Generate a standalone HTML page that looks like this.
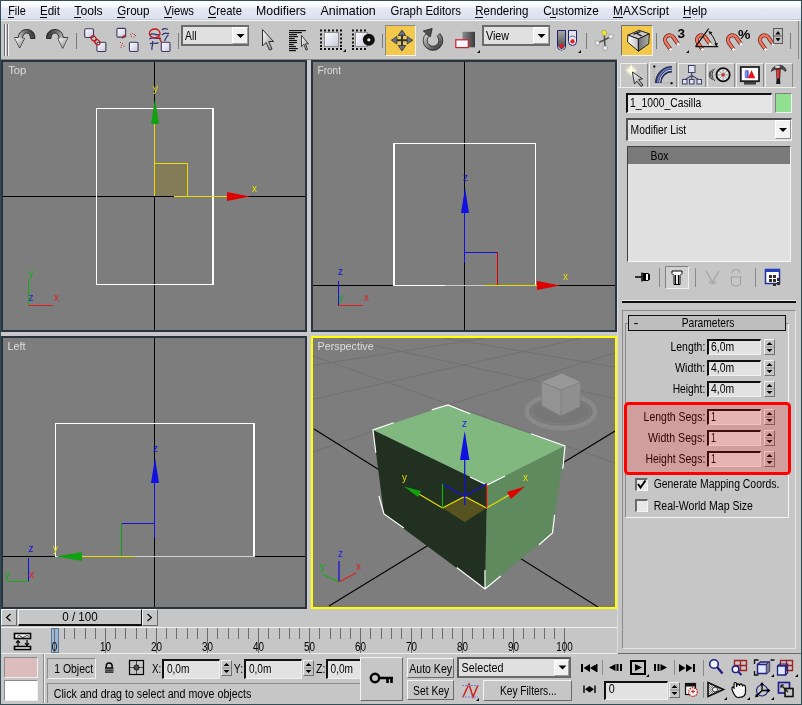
<!DOCTYPE html>
<html><head><meta charset="utf-8"><title>3ds Max</title>
<style>
*{margin:0;padding:0;box-sizing:border-box;white-space:nowrap}
html,body{width:802px;height:705px;overflow:hidden;background:#305058;font-family:"Liberation Sans", sans-serif;font-size:12px;color:#000;position:relative}
.a{position:absolute}
svg{position:absolute;left:0;top:0;overflow:visible;will-change:transform}
</style></head><body>
<div class="a" style="left:1px;top:1px;width:800px;height:19px;background:linear-gradient(#ffffff 0px,#f8f9fc 5px,#e4e8f3 8px,#dde1f0 18px);"></div>
<div class="a" style="left:1px;top:19px;width:800px;height:1px;background:#c4c8d4;"></div>
<div class="a" style="left:1px;top:20px;width:800px;height:1px;background:#f8f8f8;"></div>
<div class="a" style="left:8px;top:17px;width:6px;height:1px;background:#000;"></div>
<div class="a" style="left:40px;top:17px;width:7px;height:1px;background:#000;"></div>
<div class="a" style="left:74px;top:17px;width:7px;height:1px;background:#000;"></div>
<div class="a" style="left:117px;top:17px;width:8px;height:1px;background:#000;"></div>
<div class="a" style="left:164px;top:17px;width:8px;height:1px;background:#000;"></div>
<div class="a" style="left:208px;top:17px;width:8px;height:1px;background:#000;"></div>
<div class="a" style="left:475px;top:17px;width:8px;height:1px;background:#000;"></div>
<div class="a" style="left:550px;top:17px;width:6px;height:1px;background:#000;"></div>
<div class="a" style="left:613px;top:17px;width:10px;height:1px;background:#000;"></div>
<div class="a" style="left:683px;top:17px;width:8px;height:1px;background:#000;"></div>
<div class="a" style="left:1px;top:21px;width:800px;height:38px;background:#c6c6c6;"></div>
<div class="a" style="left:1px;top:59px;width:616px;height:1px;background:#858585;"></div>
<div class="a" style="left:181px;top:25px;width:68px;height:21px;background:#e0e0e0;border-style:solid;border-width:2px;border-color:#6a6a6a #6a6a6a #6a6a6a #6a6a6a;"></div>
<div class="a" style="left:232px;top:27px;width:16px;height:17px;background:#f0f0f0;border-style:solid;border-width:1px;border-color:#ffffff #a0a0a0 #a0a0a0 #ffffff;"></div>
<div class="a" style="left:482px;top:25px;width:68px;height:21px;background:#e0e0e0;border-style:solid;border-width:2px;border-color:#6a6a6a #6a6a6a #6a6a6a #6a6a6a;"></div>
<div class="a" style="left:533px;top:27px;width:16px;height:17px;background:#f0f0f0;border-style:solid;border-width:1px;border-color:#ffffff #a0a0a0 #a0a0a0 #ffffff;"></div>
<div class="a" style="left:385px;top:25px;width:31px;height:31px;background:#f2c94c;border-style:solid;border-width:1px;border-color:#8a8a8a #f4f4f4 #f4f4f4 #8a8a8a;"></div>
<div class="a" style="left:621px;top:25px;width:32px;height:31px;background:#f2c94c;border-style:solid;border-width:1px;border-color:#707070 #f4f4f4 #f4f4f4 #707070;"></div>
<div class="a" style="left:1px;top:60px;width:616px;height:549px;background:#c9c9c9;"></div>
<div class="a" style="left:1px;top:60px;width:306px;height:272px;background:#7d7d7d;border-style:solid;border-width:2px;border-color:#2a3340 #2a3340 #2a3340 #2a3340;"></div>
<div class="a" style="left:311px;top:60px;width:306px;height:272px;background:#7d7d7d;border-style:solid;border-width:2px;border-color:#2a3340 #2a3340 #2a3340 #2a3340;"></div>
<div class="a" style="left:1px;top:336px;width:306px;height:273px;background:#7d7d7d;border-style:solid;border-width:2px;border-color:#2a3340 #2a3340 #2a3340 #2a3340;"></div>
<div class="a" style="left:311px;top:336px;width:306px;height:273px;background:#7d7d7d;border-style:solid;border-width:2px;border-color:#ffff00 #ffff00 #ffff00 #ffff00;"></div>
<div class="a" style="left:617px;top:59px;width:184px;height:594px;background:#c6c6c6;"></div>
<div class="a" style="left:617px;top:60px;width:1px;height:593px;background:#dcdcdc;"></div>
<div class="a" style="left:620px;top:63px;width:28px;height:25px;background:#c6c6c6;border-style:solid;border-width:1px 1px 0 1px;border-color:#ececec #8a8a8a #8a8a8a #ececec"></div>
<div class="a" style="left:649px;top:62px;width:28px;height:26px;background:#c6c6c6;border-style:solid;border-width:1px 1px 0 1px;border-color:#ececec #8a8a8a #8a8a8a #ececec"></div>
<div class="a" style="left:678px;top:63px;width:28px;height:25px;background:#c6c6c6;border-style:solid;border-width:1px 1px 0 1px;border-color:#ececec #8a8a8a #8a8a8a #ececec"></div>
<div class="a" style="left:707px;top:63px;width:28px;height:25px;background:#c6c6c6;border-style:solid;border-width:1px 1px 0 1px;border-color:#ececec #8a8a8a #8a8a8a #ececec"></div>
<div class="a" style="left:736px;top:63px;width:28px;height:25px;background:#c6c6c6;border-style:solid;border-width:1px 1px 0 1px;border-color:#ececec #8a8a8a #8a8a8a #ececec"></div>
<div class="a" style="left:765px;top:63px;width:28px;height:25px;background:#c6c6c6;border-style:solid;border-width:1px 1px 0 1px;border-color:#ececec #8a8a8a #8a8a8a #ececec"></div>
<div class="a" style="left:618px;top:87px;width:178px;height:1px;background:#ececec;"></div>
<div class="a" style="left:626px;top:93px;width:146px;height:20px;background:#e4e4e4;border-style:solid;border-width:0px;border-color:#101010 #f0f0f0 #f0f0f0 #101010;border-width:2px 1px 1px 2px;"></div>
<div class="a" style="left:775px;top:93px;width:17px;height:20px;background:#92e092;border-style:solid;border-width:1px;border-color:#808080 #f0f0f0 #f0f0f0 #808080;"></div>
<div class="a" style="left:626px;top:118px;width:166px;height:23px;background:#e2e2e2;border-style:solid;border-width:0px;border-color:#505050 #f0f0f0 #f0f0f0 #505050;border-width:2px 1px 1px 2px;"></div>
<div class="a" style="left:775px;top:120px;width:16px;height:19px;background:#f2f2f2;border-style:solid;border-width:1px;border-color:#ffffff #909090 #909090 #ffffff;"></div>
<div class="a" style="left:627px;top:146px;width:164px;height:116px;background:#e0e0e0;border-style:solid;border-width:1px;border-color:#404040 #f4f4f4 #f4f4f4 #404040;"></div>
<div class="a" style="left:628px;top:147px;width:162px;height:17px;background:#7a7a7a;"></div>
<div class="a" style="left:622px;top:300px;width:174px;height:1px;background:#ececec;"></div>
<div class="a" style="left:622px;top:301px;width:174px;height:2px;background:#101010;"></div>
<div class="a" style="left:622px;top:310px;width:174px;height:339px;border-style:solid;border-width:1px;border-color:#8a8a8a #e4e4e4 #e4e4e4 #8a8a8a;"></div>
<div class="a" style="left:625px;top:323px;width:164px;height:195px;border-style:solid;border-width:1px;border-color:#8a8a8a #f4f4f4 #f4f4f4 #8a8a8a;"></div>
<div class="a" style="left:628px;top:315px;width:158px;height:16px;background:#bebebe;border-style:solid;border-width:1px;border-color:#101010 #101010 #101010 #101010;"></div>
<div class="a" style="left:707px;top:339px;width:54px;height:16px;background:#e2e2e2;border-style:solid;border-width:0px;border-color:#101010 #f0f0f0 #f0f0f0 #101010;border-width:2px 1px 1px 2px;"></div>
<div class="a" style="left:764px;top:339px;width:11px;height:16px;background:#c6c6c6;border-style:solid;border-width:1px;border-color:#f0f0f0 #707070 #707070 #f0f0f0;"></div>
<div class="a" style="left:707px;top:360px;width:54px;height:16px;background:#e2e2e2;border-style:solid;border-width:0px;border-color:#101010 #f0f0f0 #f0f0f0 #101010;border-width:2px 1px 1px 2px;"></div>
<div class="a" style="left:764px;top:360px;width:11px;height:16px;background:#c6c6c6;border-style:solid;border-width:1px;border-color:#f0f0f0 #707070 #707070 #f0f0f0;"></div>
<div class="a" style="left:707px;top:381px;width:54px;height:16px;background:#e2e2e2;border-style:solid;border-width:0px;border-color:#101010 #f0f0f0 #f0f0f0 #101010;border-width:2px 1px 1px 2px;"></div>
<div class="a" style="left:764px;top:381px;width:11px;height:16px;background:#c6c6c6;border-style:solid;border-width:1px;border-color:#f0f0f0 #707070 #707070 #f0f0f0;"></div>
<div class="a" style="left:707px;top:409px;width:54px;height:16px;background:#e2e2e2;border-style:solid;border-width:0px;border-color:#101010 #f0f0f0 #f0f0f0 #101010;border-width:2px 1px 1px 2px;"></div>
<div class="a" style="left:764px;top:409px;width:11px;height:16px;background:#c6c6c6;border-style:solid;border-width:1px;border-color:#f0f0f0 #707070 #707070 #f0f0f0;"></div>
<div class="a" style="left:707px;top:430px;width:54px;height:16px;background:#e2e2e2;border-style:solid;border-width:0px;border-color:#101010 #f0f0f0 #f0f0f0 #101010;border-width:2px 1px 1px 2px;"></div>
<div class="a" style="left:764px;top:430px;width:11px;height:16px;background:#c6c6c6;border-style:solid;border-width:1px;border-color:#f0f0f0 #707070 #707070 #f0f0f0;"></div>
<div class="a" style="left:707px;top:451px;width:54px;height:16px;background:#e2e2e2;border-style:solid;border-width:0px;border-color:#101010 #f0f0f0 #f0f0f0 #101010;border-width:2px 1px 1px 2px;"></div>
<div class="a" style="left:764px;top:451px;width:11px;height:16px;background:#c6c6c6;border-style:solid;border-width:1px;border-color:#f0f0f0 #707070 #707070 #f0f0f0;"></div>
<div class="a" style="left:635px;top:478px;width:13px;height:13px;background:#e8e8e8;border-style:solid;border-width:0px;border-color:#6a6a6a #f4f4f4 #f4f4f4 #6a6a6a;border-width:2px 1px 1px 2px;"></div>
<div class="a" style="left:635px;top:499px;width:13px;height:13px;background:#e8e8e8;border-style:solid;border-width:0px;border-color:#6a6a6a #f4f4f4 #f4f4f4 #6a6a6a;border-width:2px 1px 1px 2px;"></div>
<div class="a" style="left:618px;top:653px;width:182px;height:1px;background:#8a8a8a;"></div>
<div class="a" style="left:1px;top:609px;width:616px;height:19px;background:#c6c6c6;"></div>
<div class="a" style="left:1px;top:627px;width:616px;height:1px;background:#f2f2f2;"></div>
<div class="a" style="left:1px;top:609px;width:16px;height:17px;background:#c6c6c6;border-style:solid;border-width:1px;border-color:#f4f4f4 #6a6a6a #6a6a6a #f4f4f4;"></div>
<div class="a" style="left:18px;top:609px;width:124px;height:17px;background:#c6c6c6;border-style:solid;border-width:0px;border-color:#f4f4f4 #101010 #101010 #f4f4f4;border-width:1px 1px 2px 1px;"></div>
<div class="a" style="left:142px;top:609px;width:16px;height:17px;background:#c6c6c6;border-style:solid;border-width:1px;border-color:#f4f4f4 #6a6a6a #6a6a6a #f4f4f4;"></div>
<div class="a" style="left:1px;top:628px;width:616px;height:25px;background:#c6c6c6;"></div>
<div class="a" style="left:51px;top:628px;width:8px;height:25px;background:#9cb8d6;border-style:solid;border-width:1px;border-color:#5a7a9a #5a7a9a #5a7a9a #5a7a9a;"></div>
<div class="a" style="left:1px;top:653px;width:800px;height:51px;background:#c6c6c6;"></div>
<div class="a" style="left:1px;top:653px;width:616px;height:1px;background:#ececec;"></div>
<div class="a" style="left:618px;top:653px;width:183px;height:1px;background:#6a6a6a;"></div>
<div class="a" style="left:4px;top:657px;width:34px;height:21px;background:#dcbcbc;border-style:solid;border-width:1px;border-color:#8a8a8a #f0f0f0 #f0f0f0 #8a8a8a;"></div>
<div class="a" style="left:4px;top:680px;width:34px;height:21px;background:#ffffff;border-style:solid;border-width:1px;border-color:#8a8a8a #f0f0f0 #f0f0f0 #8a8a8a;"></div>
<div class="a" style="left:43px;top:654px;width:1px;height:49px;background:#8a8a8a;"></div>
<div class="a" style="left:44px;top:654px;width:1px;height:49px;background:#f0f0f0;"></div>
<div class="a" style="left:47px;top:658px;width:49px;height:21px;border-style:solid;border-width:1px;border-color:#8a8a8a #f0f0f0 #f0f0f0 #8a8a8a;"></div>
<div class="a" style="left:47px;top:683px;width:314px;height:20px;border-style:solid;border-width:0px;border-color:#8a8a8a #f0f0f0 #f0f0f0 #8a8a8a;border-width:1px 0 0 1px;"></div>
<div class="a" style="left:162px;top:659px;width:58px;height:20px;background:#e2e2e2;border-style:solid;border-width:0px;border-color:#101010 #f0f0f0 #f0f0f0 #101010;border-width:2px 1px 1px 2px;"></div>
<div class="a" style="left:221px;top:660px;width:11px;height:16px;background:#c6c6c6;border-style:solid;border-width:1px;border-color:#f0f0f0 #707070 #707070 #f0f0f0;"></div>
<div class="a" style="left:244px;top:659px;width:58px;height:20px;background:#e2e2e2;border-style:solid;border-width:0px;border-color:#101010 #f0f0f0 #f0f0f0 #101010;border-width:2px 1px 1px 2px;"></div>
<div class="a" style="left:303px;top:660px;width:11px;height:16px;background:#c6c6c6;border-style:solid;border-width:1px;border-color:#f0f0f0 #707070 #707070 #f0f0f0;"></div>
<div class="a" style="left:326px;top:659px;width:36px;height:20px;background:#e2e2e2;border-style:solid;border-width:0px;border-color:#101010 #f0f0f0 #f0f0f0 #101010;border-width:2px 0 1px 2px;"></div>
<div class="a" style="left:360px;top:657px;width:43px;height:44px;background:#c6c6c6;border-style:solid;border-width:1px;border-color:#f4f4f4 #6a6a6a #6a6a6a #f4f4f4;"></div>
<div class="a" style="left:407px;top:658px;width:47px;height:20px;background:#c6c6c6;border-style:solid;border-width:1px;border-color:#f4f4f4 #6a6a6a #6a6a6a #f4f4f4;"></div>
<div class="a" style="left:407px;top:680px;width:47px;height:20px;background:#c6c6c6;border-style:solid;border-width:1px;border-color:#f4f4f4 #6a6a6a #6a6a6a #f4f4f4;"></div>
<div class="a" style="left:457px;top:657px;width:114px;height:21px;background:#e0e0e0;border-style:solid;border-width:2px;border-color:#5a5a5a #6a6a6a #6a6a6a #5a5a5a;"></div>
<div class="a" style="left:554px;top:660px;width:15px;height:16px;background:#f2f2f2;border-style:solid;border-width:1px;border-color:#ffffff #a0a0a0 #a0a0a0 #ffffff;"></div>
<div class="a" style="left:483px;top:680px;width:89px;height:21px;background:#c6c6c6;border-style:solid;border-width:1px;border-color:#f4f4f4 #6a6a6a #6a6a6a #f4f4f4;"></div>
<div class="a" style="left:604px;top:681px;width:64px;height:19px;background:#e2e2e2;border-style:solid;border-width:0px;border-color:#101010 #f0f0f0 #f0f0f0 #101010;border-width:2px 1px 1px 2px;"></div>
<div class="a" style="left:669px;top:682px;width:11px;height:16px;background:#c6c6c6;border-style:solid;border-width:1px;border-color:#f0f0f0 #707070 #707070 #f0f0f0;"></div>
<svg width="802" height="705" viewBox="0 0 802 705" font-family="Liberation Sans">
<defs>
 <linearGradient id="arr" x1="0" y1="0" x2="0" y2="1"><stop offset="0" stop-color="#404040"/><stop offset=".45" stop-color="#a0a0a0"/><stop offset="1" stop-color="#f4f4f4"/></linearGradient>
 <linearGradient id="arrh" x1="0" y1="0" x2="1" y2="1"><stop offset="0" stop-color="#ffffff"/><stop offset="1" stop-color="#808080"/></linearGradient>
 <linearGradient id="box" x1="0" y1="0" x2="1" y2="1"><stop offset="0" stop-color="#ffffff"/><stop offset="1" stop-color="#c8c8e0"/></linearGradient>
 <linearGradient id="ptr" x1="0" y1="0" x2="1" y2="1"><stop offset="0" stop-color="#ffffff"/><stop offset="1" stop-color="#909090"/></linearGradient>
 <radialGradient id="star"><stop offset="0" stop-color="#ffffff"/><stop offset=".45" stop-color="#f4f0c0" stop-opacity=".9"/><stop offset="1" stop-color="#c8c8c8" stop-opacity="0"/></radialGradient>
 <linearGradient id="bend" x1="0" y1="0" x2="1" y2="0"><stop offset="0" stop-color="#303870"/><stop offset=".5" stop-color="#b0b8e0"/><stop offset="1" stop-color="#303870"/></linearGradient>
 <clipPath id="cTop"><rect x="3" y="62" width="302" height="268"/></clipPath>
 <clipPath id="cFront"><rect x="313" y="62" width="302" height="268"/></clipPath>
 <clipPath id="cLeft"><rect x="3" y="338" width="302" height="269"/></clipPath>
 <clipPath id="cPersp"><rect x="313" y="338" width="302" height="269"/></clipPath>
 <pattern id="dith" width="2" height="2" patternUnits="userSpaceOnUse"><rect width="2" height="2" fill="#e8e8e8"/><rect width="1" height="1" fill="#808080"/><rect x="1" y="1" width="1" height="1" fill="#808080"/></pattern>
 <linearGradient id="undog" x1="1" y1="0" x2="0" y2="0.4"><stop offset="0" stop-color="#1a1a1a"/><stop offset=".45" stop-color="#707070"/><stop offset="1" stop-color="#e8e8e8"/></linearGradient>
 <linearGradient id="redog" x1="0" y1="0" x2="1" y2="0.4"><stop offset="0" stop-color="#1a1a1a"/><stop offset=".45" stop-color="#707070"/><stop offset="1" stop-color="#e8e8e8"/></linearGradient>
 <linearGradient id="rotg" x1="0" y1="0" x2="1" y2="1"><stop offset="0" stop-color="#e0e0e0"/><stop offset=".5" stop-color="#808080"/><stop offset="1" stop-color="#282828"/></linearGradient>
 <linearGradient id="scg" x1="0" y1="0" x2="1" y2="0"><stop offset="0" stop-color="#8a8a8a"/><stop offset="1" stop-color="#3a3a3a"/></linearGradient>
 <linearGradient id="keyl" x1="0" y1="0" x2="1" y2="0"><stop offset="0" stop-color="#ffffff"/><stop offset="1" stop-color="#c0c0c0"/></linearGradient>
 <linearGradient id="keyr" x1="0" y1="0" x2="1" y2="0"><stop offset="0" stop-color="#707070"/><stop offset="1" stop-color="#b0b0b0"/></linearGradient>
 <clipPath id="cGrid"><path d="M313,338 H615 V475 L470,430 L313,470 Z"/></clipPath>
 <linearGradient id="pivg" x1="0" y1="0" x2="0" y2="1"><stop offset="0" stop-color="#a8a8a8"/><stop offset=".7" stop-color="#606060"/><stop offset="1" stop-color="#303050"/></linearGradient>
</defs>

<g id="toolbar">
 <!-- grip -->
 <rect x="4" y="24" width="1" height="32" fill="#6a6a6a"/><rect x="5" y="24" width="1" height="32" fill="#f4f4f4"/>
 <rect x="7" y="24" width="1" height="32" fill="#6a6a6a"/><rect x="8" y="24" width="1" height="32" fill="#f4f4f4"/>
 <!-- undo -->
 <path d="M35,38.5 C35,32 31,29.5 26.5,29.5 C22,29.5 18.8,32.5 18.2,37.5 L14.5,37.5 L19.6,48 L24.5,38.5 L22.3,38.5 C22.8,35 24.5,33 26.5,33 C29,33 30.5,35 30.5,38.5 Z" fill="url(#undog)" stroke="#202020" stroke-width=".9"/>
 <path d="M14.8,37.8 L19.6,47.5 L24.2,38.6 Z" fill="url(#arrh)"/>
 <!-- redo -->
 <path d="M46.5,38.5 C46.5,32 50.5,29.5 55,29.5 C59.5,29.5 62.7,32.5 63.3,37.5 L67.9,37.5 L62.7,48.3 L57.9,38.5 L59.2,38.5 C58.7,35 57,33 55,33 C52.5,33 51,35 51,38.5 Z" fill="url(#redog)" stroke="#202020" stroke-width=".9"/>
 <path d="M67.6,37.8 L62.7,47.8 L58.2,38.6 Z" fill="url(#arrh)"/>
 <rect x="76" y="33" width="1" height="16" fill="#7a7a7a"/>
 <!-- link -->
 <rect x="84.7" y="28.7" width="8.8" height="8.8" rx="1.2" fill="url(#box)" stroke="#3a3a60" stroke-width="1.1"/>
 <rect x="96.9" y="42.3" width="9" height="9.2" rx="1.2" fill="url(#box)" stroke="#3a3a60" stroke-width="1.1"/>
 <ellipse cx="93.6" cy="38.4" rx="3" ry="2.2" transform="rotate(45 93.6 38.4)" fill="none" stroke="#b81818" stroke-width="1.2"/>
 <ellipse cx="97.3" cy="42.2" rx="3" ry="2.2" transform="rotate(45 97.3 42.2)" fill="none" stroke="#b81818" stroke-width="1.2"/>
 <!-- unlink -->
 <rect x="116.9" y="28.4" width="8.7" height="8.7" rx="1.2" fill="url(#box)" stroke="#3a3a60" stroke-width="1.1"/>
 <rect x="129.4" y="42.3" width="8.7" height="9.2" rx="1.2" fill="url(#box)" stroke="#3a3a60" stroke-width="1.1"/>
 <path d="M122.5,38.5 C122.5,36 124.5,35 126,36.5" fill="none" stroke="#b81818" stroke-width="1.3"/>
 <path d="M130,34h1v1h-1z M132,33h1v1h-1z M134,34h1v1h-1z M131,36h1v1h-1z M133.5,36.5h1v1h-1z M135,35h1v1h-1z M120,42h1v1h-1z M122,43h1v1h-1z M121,45h1v1h-1z M123.5,45.5h1v1h-1z M120.5,47h1v1h-1z" fill="#c03838"/>
 <!-- bind -->
 <path d="M150,35 C153,32 156,36 160,34.5 M149.5,39 C153,36 157,40 161,38 M150,44 C153,41.5 156,45 158.5,42.5 M152,50 C151,46 154,44 152.5,41 M162,30 C165,27 167,30 168,29 M162,35 C166,31 167,35 169,33 M164.5,41 C166,38 166.5,36 168.5,35" fill="none" stroke="#2a3078" stroke-width="1.2"/>
 <ellipse cx="154.7" cy="33.4" rx="5.3" ry="4.4" fill="none" stroke="#c81818" stroke-width="1.3"/>
 <path d="M158.5,36.5 L161.5,42.5" stroke="#c81818" stroke-width="1.3"/>
 <rect x="161.3" y="42.2" width="8.7" height="9.3" rx="1.2" fill="url(#box)" stroke="#3a3a60" stroke-width="1.1"/>
 <rect x="178" y="33" width="1" height="16" fill="#7a7a7a"/>
 <!-- select arrow -->
 <path d="M262.5,29.5 L262.5,46 L266,42.5 L269.5,50 L272,49 L268.7,41.5 L273.5,41.5 Z" fill="url(#ptr)" stroke="#303030" stroke-width="1"/>
 <!-- select by name -->
 <rect x="289" y="30" width="16.9" height="1.2" fill="#101010"/><rect x="289" y="32" width="12.9" height="1.2" fill="#101010"/><rect x="289" y="34" width="7.9" height="1.2" fill="#101010"/><rect x="289" y="36" width="8.9" height="1.2" fill="#101010"/><rect x="289" y="38" width="5.7" height="1.2" fill="#101010"/><rect x="289" y="40" width="7.9" height="1.2" fill="#101010"/><rect x="289" y="42" width="7.9" height="1.2" fill="#101010"/><rect x="289" y="44" width="4.7" height="1.2" fill="#101010"/><rect x="289" y="46" width="6.9" height="1.2" fill="#101010"/><rect x="289" y="48" width="8.9" height="1.2" fill="#101010"/><rect x="289" y="50" width="6.9" height="1.2" fill="#101010"/>
 <path d="M301.5,35.3 L301.5,46.7 L304,44.3 L306,50.2 L307.5,49.5 L305.5,43.9 L308.4,43.9 Z" fill="url(#ptr)" stroke="#303030" stroke-width=".9"/>
 <!-- rect region -->
 <g fill="#101010">
  <path d="M320,29.5h2v2h-2z M324,29.5h2v2h-2z M328,29.5h2v2h-2z M332,29.5h2v2h-2z M336,29.5h2v2h-2z M340,29.5h2v2h-2z
   M320,48h2v2h-2z M324,48h2v2h-2z M328,48h2v2h-2z M332,48h2v2h-2z M336,48h2v2h-2z M340,48h2v2h-2z
   M320,33.5h2v2h-2z M320,37.5h2v2h-2z M320,41.5h2v2h-2z M320,45h2v2h-2z M340,33.5h2v2h-2z M340,37.5h2v2h-2z M340,41.5h2v2h-2z M340,45h2v2h-2z"/>
 </g>
 <rect x="324.5" y="32.5" width="14" height="14" fill="url(#box)" stroke="#909090"/>
 <path d="M343,52 h3 v-3z" fill="#101010"/>
 <!-- window/crossing -->
 <g fill="#101010">
  <path d="M352,29.5h2v2h-2z M356,29.5h2v2h-2z M360,29.5h2v2h-2z M364,29.5h2v2h-2z
   M352,48h2v2h-2z M356,48h2v2h-2z M360,48h2v2h-2z M364,48h2v2h-2z
   M352,33.5h2v2h-2z M352,37.5h2v2h-2z M352,41.5h2v2h-2z M352,45h2v2h-2z"/>
 </g>
 <rect x="355.5" y="32.5" width="12" height="14" fill="url(#box)" stroke="#909090"/>
 <circle cx="368.8" cy="39.8" r="6" fill="#101010"/>
 <circle cx="368.8" cy="39.8" r="1.6" fill="#e8e8e8"/>
 <rect x="382" y="34" width="1" height="14" fill="#7a7a7a"/>
 <!-- move -->
 <path d="M402,31 V50 M392.5,40.2 H411.5" stroke="#2a3040" stroke-width="2"/>
 <path d="M402,30 L398.2,35.5 H405.8 Z M402,51 L398.2,45.5 H405.8 Z M391.4,40.2 L396.9,36.4 V44 Z M412.7,40.2 L407.2,36.4 V44 Z" fill="#6a7080" stroke="#2a3040" stroke-width=".8"/>
 <!-- rotate -->
 <path d="M439.9,33.6 A9.8,9.8 0 1 1 426.1,33.6 L428.9,36.4 A5.8,5.8 0 1 0 437.1,36.4 Z" fill="url(#rotg)" stroke="#202020" stroke-width=".8"/>
 <path d="M423.3,31 L432.2,28.5 L430.3,36.8 Z" fill="#505050" stroke="#202020" stroke-width=".8" stroke-linejoin="round"/>
 <!-- scale -->
 <rect x="462.5" y="31.8" width="12.5" height="15.5" fill="url(#scg)"/>
 <rect x="455.8" y="39.8" width="12.5" height="7.8" fill="#f4f6ff" stroke="#d02020" stroke-width="1.2"/>
 <path d="M477,53 h3 v-3z" fill="#101010"/>
 <!-- pivot -->
 <path d="M557.5,30.5 H565.5 V46 A4,4 0 0 1 557.5,46 Z" fill="url(#pivg)" stroke="#202070" stroke-width="1"/>
 <path d="M558.5,46.5 A3,3 0 0 0 564.5,46.5" fill="none" stroke="#e0e0e0" stroke-width="1"/>
 <circle cx="561.5" cy="46" r="2.1" fill="#e81818"/>
 <path d="M568.5,30.5 H576.5 V41.5 A4,4 0 0 1 568.5,41.5 Z" fill="#e4e4ec" stroke="#202070" stroke-width="1"/>
 <path d="M569.5,37.5 A3.5,3 0 0 1 575.5,37.5" fill="none" stroke="#404080" stroke-width=".8"/>
 <circle cx="572.5" cy="41.4" r="2.1" fill="#e81818"/>
 <path d="M578,53 h3 v-3z" fill="#101010"/>
 <rect x="586" y="33" width="1" height="16" fill="#7a7a7a"/>
 <!-- manipulate -->
 <path d="M604.3,33 L604.5,40 L597.3,43 M604.5,40 L610.9,36.4 M604.5,40 L605.2,48.2" stroke="#505050" stroke-width="1.6" fill="none"/>
 <circle cx="604.3" cy="32.9" r="2.6" fill="#f0e040" stroke="#8a8a30" stroke-width=".5"/>
 <circle cx="610.9" cy="36.4" r="2.4" fill="#e8e8e8" stroke="#707070" stroke-width=".5"/>
 <circle cx="597.3" cy="43" r="2.4" fill="#e8e8e8" stroke="#707070" stroke-width=".5"/>
 <circle cx="605.2" cy="48.2" r="2.4" fill="#e8e8e8" stroke="#707070" stroke-width=".5"/>
 <!-- keyboard override -->
 <path d="M627.9,35.1 L639.2,30.3 L649.3,33.8 L638.4,39 Z" fill="#c8c8c8" stroke="#101010" stroke-width=".9"/>
 <path d="M627.9,35.1 L638.4,39 L638.4,51.2 L627.5,42 Z" fill="url(#keyl)" stroke="#101010" stroke-width=".9"/>
 <path d="M638.4,39 L649.3,33.8 L648.8,43.8 L638.4,51.2 Z" fill="url(#keyr)" stroke="#101010" stroke-width=".9"/>
 <path d="M633,33.8 L640,31 L641,32 L634,34.8 Z M637.5,33 L642.5,35.8 L641,36.5 L636,33.7 Z" fill="#202020"/>
 <rect x="656" y="33" width="1" height="16" fill="#7a7a7a"/>
 <!-- snaps -->
 <g transform="translate(669.6,39.9) rotate(-35)"><path d="M-4.6,8.6 V0 A4.6,4.6 0 0 1 4.6,0 V8.6" fill="none" stroke="#6a2a20" stroke-width="4"/><path d="M-4.6,7 V0 A4.6,4.6 0 0 1 4.6,0 V7" fill="none" stroke="#f07860" stroke-width="2.4"/><rect x="-6" y="7.2" width="2.8" height="2.2" fill="#fff"/><rect x="3.2" y="7.2" width="2.8" height="2.2" fill="#fff"/></g>
 <text x="677.5" y="38" font-size="12" font-weight="bold" textLength="7.5" lengthAdjust="spacingAndGlyphs">3</text>
 <path d="M686,53 h3 v-3z" fill="#101010"/>
 <g transform="translate(701.5,39.9) rotate(-35)"><path d="M-4.6,8.6 V0 A4.6,4.6 0 0 1 4.6,0 V8.6" fill="none" stroke="#6a2a20" stroke-width="4"/><path d="M-4.6,7 V0 A4.6,4.6 0 0 1 4.6,0 V7" fill="none" stroke="#f07860" stroke-width="2.4"/><rect x="-6" y="7.2" width="2.8" height="2.2" fill="#fff"/><rect x="3.2" y="7.2" width="2.8" height="2.2" fill="#fff"/></g>
 <path d="M695.5,46.6 H718.2 M708.7,28.6 L695.5,46.6" fill="none" stroke="#101010" stroke-width="1.2"/>
 <path d="M710,32.5 C713,36 715.5,41 716.3,45" fill="none" stroke="#101010" stroke-width="1"/>
 <path d="M708.5,31 l4,1.2 l-2.6,2.6z M716.5,47 l-2.2,-3.6 l3.6,-0.4z" fill="#101010"/>
 <g transform="translate(732.5,39.9) rotate(-35)"><path d="M-4.6,8.6 V0 A4.6,4.6 0 0 1 4.6,0 V8.6" fill="none" stroke="#6a2a20" stroke-width="4"/><path d="M-4.6,7 V0 A4.6,4.6 0 0 1 4.6,0 V7" fill="none" stroke="#f07860" stroke-width="2.4"/><rect x="-6" y="7.2" width="2.8" height="2.2" fill="#fff"/><rect x="3.2" y="7.2" width="2.8" height="2.2" fill="#fff"/></g>
 <text x="738" y="39" font-size="13" font-weight="bold" textLength="12.4" lengthAdjust="spacingAndGlyphs">%</text>
 <g transform="translate(764.5,39.9) rotate(-35)"><path d="M-4.6,8.6 V0 A4.6,4.6 0 0 1 4.6,0 V8.6" fill="none" stroke="#6a2a20" stroke-width="4"/><path d="M-4.6,7 V0 A4.6,4.6 0 0 1 4.6,0 V7" fill="none" stroke="#f07860" stroke-width="2.4"/><rect x="-6" y="7.2" width="2.8" height="2.2" fill="#fff"/><rect x="3.2" y="7.2" width="2.8" height="2.2" fill="#fff"/></g>
 <rect x="773.5" y="28.5" width="9" height="15" fill="#c0c0c0" stroke="#5a5a5a" stroke-width="1"/>
 <path d="M774,36 h8" stroke="#5a5a5a"/>
 <path d="M775.5,34.5 l2.5,-3.5 l2.5,3.5z M775.5,38 l2.5,3.5 l2.5,-3.5z" fill="#000"/>
 <rect x="790" y="33" width="1" height="16" fill="#7a7a7a"/>
 <rect x="798" y="21" width="1" height="38" fill="#8a8a8a"/>
 <!-- dropdown arrows -->
 <path d="M236.5,34 h8 l-4,4z M537.5,34 h8 l-4,4z" fill="#000"/>
</g>

<g id="viewports">
 <!-- TOP -->
 <g clip-path="url(#cTop)" shape-rendering="crispEdges">
  <rect x="3" y="196" width="302" height="1" fill="#000"/>
  <rect x="154" y="62" width="1" height="268" fill="#000"/>
  <rect x="155" y="163" width="32" height="33" fill="#8a7a3a" fill-opacity=".55"/>
  <path d="M96.5,108.5 H213 V284.5 H96.5 Z" fill="none" stroke="#fff" stroke-width="1.6"/>
  <rect x="154" y="124" width="1.3" height="72" fill="#e8dc00"/>
  <rect x="155" y="163" width="32" height="1.3" fill="#e8dc00"/>
  <rect x="186.7" y="163" width="1.3" height="34" fill="#e8dc00"/>
  <rect x="174" y="196" width="54" height="1.3" fill="#e8dc00"/>
 </g>
 <path d="M155,99 L151,124 L159,124 Z" fill="#10a010"/>
 <path d="M250,196.5 L227,192 L227,201 Z" fill="#e00000"/>
 <text x="153" y="92" font-size="10" fill="#e8dc00">y</text>
 <text x="252" y="192" font-size="10" fill="#e8dc00">x</text>
 <rect x="28" y="280" width="1" height="25" fill="#10b010"/>
 <rect x="28" y="305" width="25" height="1" fill="#e02020"/>
 <text x="28.5" y="277" font-size="10" fill="#10b010">y</text>
 <text x="28.5" y="301" font-size="10" fill="#2020e0">z</text>
 <text x="54" y="301" font-size="10" fill="#e02020">x</text>
 <text x="8.2" y="73.9" font-size="11.6" fill="#dedede" textLength="18.2" lengthAdjust="spacingAndGlyphs">Top</text>

 <!-- FRONT -->
 <g clip-path="url(#cFront)" shape-rendering="crispEdges">
  <rect x="313" y="285" width="302" height="1" fill="#000"/>
  <rect x="464" y="62" width="1" height="268" fill="#000"/>
  <path d="M394,285.5 V143.5 H535.5 V285.5" fill="none" stroke="#fff" stroke-width="1.6"/>
  <rect x="394" y="284.7" width="51" height="1.6" fill="#fff"/>
  <rect x="445" y="284.7" width="40" height="1.6" fill="#c8c8c8"/>
  <rect x="464" y="213" width="1.3" height="50" fill="#1010e0"/>
  <rect x="464" y="252" width="34" height="1.3" fill="#1010e0"/>
  <rect x="497" y="252" width="1.3" height="33" fill="#e00000"/>
  <rect x="485" y="284.7" width="53" height="1.6" fill="#e8dc00"/>
 </g>
 <path d="M465,188 L461,213 L469,213 Z" fill="#1010e0"/>
 <path d="M560,285.5 L537,281 L537,290 Z" fill="#e00000"/>
 <text x="463" y="181" font-size="10" fill="#1010e0">z</text>
 <text x="563" y="280" font-size="10" fill="#e8dc00">x</text>
 <rect x="338" y="281" width="1" height="24" fill="#1010e0"/>
 <rect x="338" y="305" width="25" height="1" fill="#e02020"/>
 <text x="338" y="275" font-size="10" fill="#1010e0">z</text>
 <text x="338.5" y="301" font-size="10" fill="#10b010">y</text>
 <text x="364" y="301" font-size="10" fill="#e02020">x</text>
 <text x="317.5" y="73.8" font-size="11.6" fill="#dedede" textLength="23.5" lengthAdjust="spacingAndGlyphs">Front</text>

 <!-- LEFT -->
 <g clip-path="url(#cLeft)" shape-rendering="crispEdges">
  <rect x="3" y="556" width="302" height="1" fill="#000"/>
  <rect x="154" y="338" width="1" height="269" fill="#000"/>
  <path d="M55.5,556.5 V423.5 H254 V556.5" fill="none" stroke="#fff" stroke-width="1.6"/>
  <rect x="55" y="555.7" width="27" height="1.6" fill="#fff"/>
  <rect x="135" y="555.7" width="120" height="1.6" fill="#d4d4d4"/>
  <rect x="154" y="483" width="1.3" height="55" fill="#1010e0"/>
  <rect x="122" y="523" width="33" height="1.3" fill="#1010e0"/>
  <rect x="121" y="523" width="1.3" height="33" fill="#10a010"/>
  <rect x="82" y="555.7" width="53" height="1.6" fill="#e8dc00"/>
 </g>
 <path d="M155,458 L151,483 L159,483 Z" fill="#1010e0"/>
 <path d="M56,556.5 L82,552 L82,561 Z" fill="#10a010"/>
 <text x="153" y="452" font-size="10" fill="#1010e0">z</text>
 <text x="53" y="552" font-size="10" fill="#e8dc00">y</text>
 <rect x="28" y="558" width="1" height="24" fill="#1010e0"/>
 <rect x="6" y="581" width="23" height="1" fill="#10b010"/>
 <text x="28.5" y="552" font-size="10" fill="#1010e0">z</text>
 <text x="5" y="578" font-size="10" fill="#10b010">y</text>
 <text x="29" y="578" font-size="10" fill="#e02020">x</text>
 <text x="7.5" y="350" font-size="11.6" fill="#dedede" textLength="18" lengthAdjust="spacingAndGlyphs">Left</text>

 <!-- PERSPECTIVE -->
 <g clip-path="url(#cPersp)">
  <g stroke="#717171" stroke-width="1" fill="none">
   <path d="M313,356 L616,463.5"/>
   <path d="M340.7,338 L616,398.8"/>
   <path d="M444.5,338 L616,367.3"/>
   <path d="M313,452 L448,405 L616,352.4"/>
   <path d="M313,399.3 L580,338.5"/>
   <path d="M313,365.4 L486,338"/>
  </g>
  <path d="M314,429 L598,607" stroke="#000" stroke-width="1.1"/>
  <path d="M329,606 L615,431" stroke="#000" stroke-width="1.1"/>
  <!-- viewcube -->
  <ellipse cx="561" cy="411.5" rx="34" ry="16.5" fill="#777777" stroke="#8a8a8a" stroke-width="4.5"/>
  <ellipse cx="561" cy="411.5" rx="36.5" ry="19" fill="none" stroke="#848484" stroke-width="1"/>
  <ellipse cx="561" cy="411.5" rx="29" ry="12.5" fill="none" stroke="#7f7f7f" stroke-width="1.5"/>
  <path d="M541,382 L562,373 L581,382 L561,390 Z" fill="#989898"/>
  <path d="M561,390 L581,382 L580,407 L561,416 Z" fill="#8f8f8f"/>
  <path d="M541,382 L561,390 L561,416 L542,406 Z" fill="#939393"/>
  <path d="M541,382 L562,373 L581,382 L580,407 L561,416 L542,406 Z M541,382 L561,390 L581,382 M561,390 V416" fill="none" stroke="#7c7c7c" stroke-width=".8"/>
  <!-- box -->
  <path d="M373,430 L448,405 L565,446 L487,485 Z" fill="#80b880"/>
  <path d="M487,485 L565,446 L552,533 L485,589 Z" fill="#5e8a5e"/>
  <path d="M373,430 L487,485 L485,589 L384,514 Z" fill="#213021"/>
  <g stroke="#ffffff" stroke-width="1.2" fill="none" stroke-linejoin="miter">
   <path d="M393.8,422.8 L373,430 L375.8,452.7"/>
   <path d="M431.7,409.8 L448,405 L470,413.8"/>
   <path d="M530.9,433.8 L565,446 L562.8,468.7"/>
   <path d="M378.9,496 L384,514 L403.8,527.9"/>
   <path d="M456.7,567.4 L485,589 L500.7,576 M485,589 L485,570"/>
   <path d="M554.6,514.9 L552.5,533 L539,544.7"/>
   <path d="M470,477 L487,485 L505,476"/>
  </g>
  <!-- gizmo -->
  <path d="M442.5,508 L464.7,496.5 L486.5,508 L464.7,522 Z" fill="#7a6a20" fill-opacity=".6"/>
  <path d="M442.5,508 L464.7,496.5 L486.5,508 M418,493.5 L442.5,508 M486.5,508 L509,495" fill="none" stroke="#e8dc00" stroke-width="1.2"/>
  <path d="M442.5,483.7 L464.7,496.5 L486.5,483.7 M464.7,505 V459" fill="none" stroke="#1010e0" stroke-width="1.2"/>
  <path d="M442.5,483.7 V508" stroke="#10b010" stroke-width="1.2"/>
  <path d="M486.5,483.7 V508" stroke="#e00000" stroke-width="1.2"/>
  <path d="M464.7,431 L460,460 L469.4,460 Z" fill="#1010e0"/>
  <path d="M404,486.5 L418,497 L421,491 Z" fill="#10a010"/>
  <path d="M525,486.5 L507,492 L511,499 Z" fill="#e00000"/>
  <text x="462" y="427" font-size="10" fill="#2020f0">z</text>
  <text x="402" y="481" font-size="10" fill="#e8dc00">y</text>
  <text x="523" y="481" font-size="10" fill="#e8dc00">x</text>
  <path d="M339,582 V561" stroke="#1010e0" stroke-width="1.2"/>
  <path d="M339,582 L322,574" stroke="#10b010" stroke-width="1.2"/>
  <path d="M339,582 L356,573" stroke="#e02020" stroke-width="1.2"/>
  <text x="338" y="557" font-size="10" fill="#2020f0">z</text>
  <text x="320" y="570" font-size="10" fill="#10b010">y</text>
  <text x="356" y="570" font-size="10" fill="#e02020">x</text>
 </g>
 <text x="317.6" y="350" font-size="11.6" fill="#dedede" textLength="56" lengthAdjust="spacingAndGlyphs">Perspective</text>
</g>

<g id="panel">
 <!-- create tab -->
 <circle cx="631.2" cy="70.4" r="7" fill="url(#star)"/>
 <path d="M631.2,63.5 L632.2,69.4 L638,70.4 L632.2,71.4 L631.2,77 L630.2,71.4 L624.5,70.4 L630.2,69.4 Z" fill="#fffff4" opacity=".9"/>
 <path d="M628,70.4 h6.4 M631.2,67.2 v6.4" stroke="#fffff0" stroke-width="1"/>
 <path d="M632.4,72 L634.5,84 L636.8,81.2 L641,86.5 L643,85 L638.8,79.7 L642.5,78.8 Z" fill="url(#ptr)" stroke="#202020" stroke-width=".9" stroke-linejoin="round"/>
 <!-- modify tab -->
 <path d="M654.3,67 V83 H671" fill="none" stroke="#808080" stroke-width=".6" stroke-dasharray="1 1"/>
 <path d="M654.3,66.4 H671" fill="none" stroke="#a0a0a0" stroke-width=".5" stroke-dasharray="1 1"/>
 <rect x="653.3" y="65.5" width="2" height="2" fill="#000"/><rect x="670.6" y="82.2" width="2" height="2" fill="#000"/>
 <path d="M655,83 A17,17 0 0 1 672,66 L672,72.5 A10.5,10.5 0 0 0 661.5,83 Z" fill="#2a3058"/>
 <path d="M657.8,82.5 A14.2,14.2 0 0 1 672,68.3" fill="none" stroke="#7080c0" stroke-width="1.6"/>
 <path d="M659.6,82.5 A12.4,12.4 0 0 1 672,70.1" fill="none" stroke="#d8e0ff" stroke-width="1"/>
 <!-- hierarchy -->
 <rect x="688.5" y="65.5" width="6.5" height="7" fill="#e0e0f4" stroke="#40406a" stroke-width="1"/>
 <path d="M691.7,72.5 V80 M691.7,75.5 L684.5,80 M691.7,75.5 L699.2,80" stroke="#40405a" stroke-width="1.1" fill="none"/>
 <rect x="682.5" y="79.5" width="4.5" height="4.5" fill="#e0e0f4" stroke="#40406a"/>
 <rect x="689.5" y="79.5" width="4.5" height="4.5" fill="#e0e0f4" stroke="#40406a"/>
 <rect x="697" y="79.5" width="4.5" height="4.5" fill="#e0e0f4" stroke="#40406a"/>
 <!-- motion -->
 <path d="M714.8,68.5 A8.5,8.5 0 0 0 714.8,81 M712.5,69.5 A8,8 0 0 0 712.5,80 M710.3,71 A7,7 0 0 0 710.3,78.5" fill="none" stroke="#404040" stroke-width="1"/>
 <circle cx="723.1" cy="74.8" r="6.6" fill="#e8e8e8" stroke="#101010" stroke-width="1.8"/>
 <path d="M723.1,69.5 V80.1 M717.8,74.8 H728.4 M719.3,71 L726.9,78.6 M726.9,71 L719.3,78.6" stroke="#808080" stroke-width=".8"/>
 <circle cx="723.1" cy="74.8" r="1.6" fill="#e02020"/>
 <!-- display -->
 <rect x="740.8" y="67" width="18.2" height="14.2" fill="#ffffff" stroke="#202020" stroke-width="1.8"/>
 <rect x="744" y="82" width="12" height="2.6" fill="#404040"/>
 <rect x="744.8" y="70" width="3.8" height="8.2" rx="1.5" fill="#4a5ac8"/>
 <rect x="745.5" y="70.5" width="1.2" height="7" fill="#a0b0ff"/>
 <path d="M747.8,78.2 L751.5,70 L755.3,78.2 Z" fill="#e81818"/>
 <!-- utilities hammer -->
 <path d="M771.5,70.5 C772.5,67 776,65.3 779.5,65.3 C782.5,65.3 785,67 786.3,70.5 L785,71.5 C784,69.5 782,68.8 780.5,69 L775.5,69.5 C774,69.8 772.8,70.3 771.5,71.5 Z" fill="#4a4a4a" stroke="#202020" stroke-width=".6"/>
 <ellipse cx="777.5" cy="66.8" rx="2.5" ry="1.3" fill="#e0e0e0"/>
 <path d="M776.2,69 h4.2 l-0.5,9.5 h-3.2z" fill="#b02020" stroke="#401010" stroke-width=".5"/>
 <rect x="777.4" y="70" width="1" height="8" fill="#e86060"/>
 <path d="M776.6,78.5 h3.4 l0.4,5.5 h-4.2z" fill="#181818"/>
 <!-- stack toolbar -->
 <path d="M635,277 H642 M642,272.5 V281.5" stroke="#000" stroke-width="1.5"/>
 <path d="M643,273 H648 L650,274.5 V279.5 L648,281 H643 Z" fill="#000"/>
 <path d="M646,274 h2 v6 h-2z" fill="#fff"/>
 <rect x="659" y="268" width="1" height="19" fill="#8a8a8a"/>
 <rect x="665.5" y="266.5" width="23" height="22" fill="#d0d0d0" stroke="#f0f0f0"/>
 <path d="M665.5,288.5 V266.5 H688.5" fill="none" stroke="#808080"/>
 <path d="M672,271 h10 v2.5 l-2,2 v9 h-6 v-9 l-2,-2z" fill="#fff" stroke="#000" stroke-width="1"/>
 <path d="M675.5,275 v9.5 M678.5,275 v9.5" stroke="#000" stroke-width="1.2"/>
 <rect x="695" y="268" width="1" height="19" fill="#8a8a8a"/>
 <path d="M706,271 L712.5,282 L719,271 M709.5,281 a3,2.5 0 1 0 6,0" fill="none" stroke="#a0a0a0" stroke-width="1.1"/>
 <path d="M732,273 a4,3.5 0 1 1 8,0 M731.5,277 h9 v6 a4.5,3 0 0 1 -9,0z" fill="none" stroke="#a0a0a0" stroke-width="1.1"/>
 <rect x="755" y="268" width="1" height="19" fill="#8a8a8a"/>
 <rect x="765.5" y="269.5" width="14" height="14" fill="#ffffff" stroke="#2030a0" stroke-width="1.5"/>
 <rect x="765" y="269" width="15" height="3" fill="#2040c0"/>
 <path d="M769,275h3v3h-3z M773,275h3v3h-3z M769,279h3v3h-3z M773,279h3v3h-3z M777,278h3v3h-3z M777,282h3v3h-3z M773,283h3v3h-3z" fill="#303030"/>
 <path d="M779,128 h8 l-4,4z" fill="#000"/>
 <!-- checkmark -->
 <path d="M638,484 L640.5,487.5 L645.5,480.5" fill="none" stroke="#000" stroke-width="2"/>
</g>

<g id="bottom">
 <!-- slider arrows -->
 <path d="M10.5,614 L6.5,617.5 L10.5,621" fill="none" stroke="#000" stroke-width="1.1"/>
 <path d="M147.5,614 L151.5,617.5 L147.5,621" fill="none" stroke="#000" stroke-width="1.1"/>
 <!-- trackbar icon -->
 <rect x="14.5" y="633.5" width="16" height="5" fill="#fff" stroke="#000" stroke-width="1.6"/>
 <path d="M17,636.5 q2,-2 4,0 t4,0 t4,0" fill="none" stroke="#000" stroke-width=".8"/>
 <path d="M18,646 V641 M16,643 L18,640.5 L20,643 M27,640 V645 M25,643 L27,645.5 L29,643" fill="none" stroke="#000" stroke-width="1.2"/>
 <rect x="14.5" y="646.5" width="16" height="3" fill="#fff" stroke="#000" stroke-width="1.6"/>
 <g><rect x="54" y="628" width="1" height="25" fill="#6a6a6a"/><rect x="64" y="628" width="1" height="11" fill="#6a6a6a"/><rect x="74" y="628" width="1" height="11" fill="#6a6a6a"/><rect x="85" y="628" width="1" height="11" fill="#6a6a6a"/><rect x="95" y="628" width="1" height="11" fill="#6a6a6a"/><rect x="105" y="628" width="1" height="25" fill="#6a6a6a"/><rect x="115" y="628" width="1" height="11" fill="#6a6a6a"/><rect x="125" y="628" width="1" height="11" fill="#6a6a6a"/><rect x="136" y="628" width="1" height="11" fill="#6a6a6a"/><rect x="146" y="628" width="1" height="11" fill="#6a6a6a"/><rect x="156" y="628" width="1" height="25" fill="#6a6a6a"/><rect x="166" y="628" width="1" height="11" fill="#6a6a6a"/><rect x="176" y="628" width="1" height="11" fill="#6a6a6a"/><rect x="187" y="628" width="1" height="11" fill="#6a6a6a"/><rect x="197" y="628" width="1" height="11" fill="#6a6a6a"/><rect x="207" y="628" width="1" height="25" fill="#6a6a6a"/><rect x="217" y="628" width="1" height="11" fill="#6a6a6a"/><rect x="228" y="628" width="1" height="11" fill="#6a6a6a"/><rect x="238" y="628" width="1" height="11" fill="#6a6a6a"/><rect x="248" y="628" width="1" height="11" fill="#6a6a6a"/><rect x="258" y="628" width="1" height="25" fill="#6a6a6a"/><rect x="268" y="628" width="1" height="11" fill="#6a6a6a"/><rect x="279" y="628" width="1" height="11" fill="#6a6a6a"/><rect x="289" y="628" width="1" height="11" fill="#6a6a6a"/><rect x="299" y="628" width="1" height="11" fill="#6a6a6a"/><rect x="309" y="628" width="1" height="25" fill="#6a6a6a"/><rect x="319" y="628" width="1" height="11" fill="#6a6a6a"/><rect x="330" y="628" width="1" height="11" fill="#6a6a6a"/><rect x="340" y="628" width="1" height="11" fill="#6a6a6a"/><rect x="350" y="628" width="1" height="11" fill="#6a6a6a"/><rect x="360" y="628" width="1" height="25" fill="#6a6a6a"/><rect x="370" y="628" width="1" height="11" fill="#6a6a6a"/><rect x="381" y="628" width="1" height="11" fill="#6a6a6a"/><rect x="391" y="628" width="1" height="11" fill="#6a6a6a"/><rect x="401" y="628" width="1" height="11" fill="#6a6a6a"/><rect x="411" y="628" width="1" height="25" fill="#6a6a6a"/><rect x="421" y="628" width="1" height="11" fill="#6a6a6a"/><rect x="432" y="628" width="1" height="11" fill="#6a6a6a"/><rect x="442" y="628" width="1" height="11" fill="#6a6a6a"/><rect x="452" y="628" width="1" height="11" fill="#6a6a6a"/><rect x="462" y="628" width="1" height="25" fill="#6a6a6a"/><rect x="472" y="628" width="1" height="11" fill="#6a6a6a"/><rect x="483" y="628" width="1" height="11" fill="#6a6a6a"/><rect x="493" y="628" width="1" height="11" fill="#6a6a6a"/><rect x="503" y="628" width="1" height="11" fill="#6a6a6a"/><rect x="513" y="628" width="1" height="25" fill="#6a6a6a"/><rect x="523" y="628" width="1" height="11" fill="#6a6a6a"/><rect x="534" y="628" width="1" height="11" fill="#6a6a6a"/><rect x="544" y="628" width="1" height="11" fill="#6a6a6a"/><rect x="554" y="628" width="1" height="11" fill="#6a6a6a"/><rect x="564" y="628" width="1" height="25" fill="#6a6a6a"/></g>
 <g><text x="51.75" y="651" font-size="12" textLength="5.5" lengthAdjust="spacingAndGlyphs">0</text><text x="100.0" y="651" font-size="12" textLength="11" lengthAdjust="spacingAndGlyphs">10</text><text x="151.0" y="651" font-size="12" textLength="11" lengthAdjust="spacingAndGlyphs">20</text><text x="202.0" y="651" font-size="12" textLength="11" lengthAdjust="spacingAndGlyphs">30</text><text x="253.0" y="651" font-size="12" textLength="11" lengthAdjust="spacingAndGlyphs">40</text><text x="304.0" y="651" font-size="12" textLength="11" lengthAdjust="spacingAndGlyphs">50</text><text x="355.0" y="651" font-size="12" textLength="11" lengthAdjust="spacingAndGlyphs">60</text><text x="406.0" y="651" font-size="12" textLength="11" lengthAdjust="spacingAndGlyphs">70</text><text x="457.0" y="651" font-size="12" textLength="11" lengthAdjust="spacingAndGlyphs">80</text><text x="508.0" y="651" font-size="12" textLength="11" lengthAdjust="spacingAndGlyphs">90</text><text x="556.25" y="651" font-size="12" textLength="16.5" lengthAdjust="spacingAndGlyphs">100</text></g>
 <!-- status icons -->
 <path d="M106.3,667.5 V665.8 a2.9,2.9 0 0 1 5.8,0 V667.5" fill="none" stroke="#000" stroke-width="1.5"/>
 <rect x="105" y="667.3" width="8.4" height="5.4" fill="#000"/>
 <path d="M105,669.2 h8.4 M105,671.1 h8.4" stroke="#c6c6c6" stroke-width=".8"/>
 <rect x="129.5" y="660.5" width="14" height="14" fill="none" stroke="#000" stroke-width="1.2"/>
 <path d="M129,667.5 h15 M136.5,660 v15" stroke="#000" stroke-width=".6"/>
 <circle cx="136.5" cy="667.5" r="2.6" fill="#505050" stroke="#000" stroke-width=".8"/>
 <!-- key icon -->
 <circle cx="375" cy="678" r="4.2" fill="none" stroke="#000" stroke-width="2.4"/>
 <path d="M379,678 H393 M387.5,678 v5 M391.5,678 v5" stroke="#000" stroke-width="2.6"/>
 <!-- dropdown arrow selected -->
 <path d="M558.5,665.5 h8 l-4,4z" fill="#000"/>
 <!-- key mode icon -->
 <path d="M463,697 L469,684 L473,697 L478,685" fill="none" stroke="#d02020" stroke-width="1.5"/>
 <path d="M462,685.5 H478 M462,697 H478" stroke="#7080d0" stroke-width="1" stroke-dasharray="2 1"/>
 <path d="M476,701 h3 v-3z" fill="#000"/>
 <!-- playback row 1 -->
 <path d="M581,664 h2 v8 h-2z M583.5,668 L590,664 V672Z M590,668 L596.5,664 V672Z M596,664 h1.5 v8 h-1.5z" fill="#000"/>
 <rect x="602" y="660" width="1" height="15" fill="#8a8a8a"/>
 <path d="M609,667.5 L615.5,664 V671Z M616.5,664 h2 v7 h-2z M620,664 h2 v7 h-2z" fill="#000"/>
 <rect x="631" y="661" width="14" height="13" fill="none" stroke="#000" stroke-width="2"/>
 <path d="M635,664 L642,667.5 L635,671Z" fill="#000"/>
 <path d="M646,677 h3 v-3z" fill="#000"/>
 <path d="M654,664 h2 v7 h-2z M657.5,664 h2 v7 h-2z M660.5,664 L667,667.5 L660.5,671Z" fill="#000"/>
 <rect x="674" y="660" width="1" height="15" fill="#8a8a8a"/>
 <path d="M679,664 L685.5,668 L679,672Z M686,664 L692.5,668 L686,672Z M693,664 h2 v8 h-2z" fill="#000"/>
 <rect x="703" y="660" width="1" height="16" fill="#8a8a8a"/>
 <!-- zoom icons -->
 <circle cx="714" cy="664" r="4.3" fill="#f0f4ff" stroke="#202080" stroke-width="1.6"/>
 <path d="M717,667 L722.5,673.5" stroke="#202080" stroke-width="2.4"/>
 <path d="M734.5,660.5 h12 v10 h-12z M740.5,660.5 v10 M734.5,665.5 h12" fill="none" stroke="#a02020" stroke-width="1.3"/>
 <circle cx="735.6" cy="669.2" r="3.3" fill="#f0f4ff" stroke="#202080" stroke-width="1.5"/>
 <path d="M738,671.5 L741.5,675" stroke="#202080" stroke-width="2"/>
 <path d="M757.5,664.5 h9 v9 h-9z" fill="#e0e8ff" stroke="#202080" stroke-width="1.4"/>
 <path d="M757.5,664.5 l3,-2.5 h9 v9 l-3,2.5 M766.5,664.5 l3,-2.5" fill="none" stroke="#202080" stroke-width="1.3"/>
 <path d="M766.5,673.5 l3,-2.5 v-9 l-3,2.5z" fill="#808080"/>
 <path d="M754.5,664 v-4 h4 M770.5,660 h4 M754.5,671 v4 h4" fill="none" stroke="#101010" stroke-width="1.3"/>
 <path d="M771,677 h3 v-3z" fill="#000"/>
 <path d="M780.5,660.5 h12 v10 h-12z M786.5,660.5 v10 M780.5,665.5 h12" fill="none" stroke="#a02020" stroke-width="1.3"/>
 <path d="M777.5,666 h8 v9 h-8z" fill="#e0e8ff" stroke="#202080" stroke-width="1.3"/>
 <path d="M777.5,666 l2,-2 h8 v9 l-2,2" fill="none" stroke="#202080" stroke-width="1.2"/>
 <path d="M795,677 h3 v-3z" fill="#000"/>
 <!-- row 2 -->
 <path d="M584,685.5 v7.5 M595,685.5 v7.5" stroke="#000" stroke-width="1.4"/>
 <path d="M585,689.2 L589.5,686 V692.5Z M594,689.2 L589.5,686 V692.5Z" fill="#000"/>
 <rect x="685.5" y="683.5" width="10" height="11" fill="#f0f0f0" stroke="#101010" stroke-width="1.2"/>
 <rect x="685.5" y="683.5" width="10" height="3" fill="#101010"/>
 <circle cx="693" cy="692" r="4.3" fill="#f8f8f8" stroke="#c02020" stroke-width="1.2" stroke-dasharray="1.5 .8"/>
 <path d="M693,689.5 v4 M691,691.5 h4" stroke="#c02020" stroke-width="1"/>
 <rect x="703" y="682" width="1" height="16" fill="#8a8a8a"/>
 <path d="M708,682.5 L723.5,689.5 L708,696.5 Z" fill="url(#dith)" stroke="#101010" stroke-width="1.6"/>
 <circle cx="715" cy="689.5" r="2.5" fill="#f0f0f0" stroke="#101010" stroke-width=".8"/>
 <path d="M724,700 h3 v-3z" fill="#000"/>
 <path d="M733,692 C731,688 732,686 734,688 L734,684 C734,682 736.5,682 736.5,684 L736.5,687 C736.5,683 739.5,683 739.5,686 C739.5,683 742.5,683 742.5,686.5 C742.5,684.5 745.5,684.5 745.5,687.5 L745.5,692 C745.5,696 742,697.5 738.5,697.5 C735.5,697.5 734.5,695 733,692 Z" fill="#f4f4f4" stroke="#000" stroke-width="1.2"/>
 <path d="M747,700 h3 v-3z" fill="#000"/>
 <circle cx="762" cy="690.5" r="5.5" fill="none" stroke="#202080" stroke-width="1.2"/>
 <path d="M762,683.5 V690.5 H769 M762,690.5 L756.5,696" stroke="#000" stroke-width="1.3" fill="none"/>
 <path d="M762,682 l-2.2,3 h4.4z M770.5,690.5 l-3,-2.2 v4.4z M755,697.5 l1,-3.8 l2.8,2.8z" fill="#000"/>
 <path d="M771,700 h3 v-3z" fill="#000"/>
 <rect x="778.5" y="682.5" width="11" height="10.5" fill="none" stroke="#202090" stroke-width="1.7"/>
 <rect x="785" y="688.5" width="8" height="8" fill="#c6c6c6" stroke="#101010" stroke-width="1.6"/>
 <path d="M781,685 L788,692 M781,685 h3 M781,685 v3" stroke="#101010" stroke-width="1.1" fill="none"/>
</g>
<path d="M625.5,403.5 h164 a2,2 0 0 1 2,2 v67 a2,2 0 0 1 -2,2 h-164 a2,2 0 0 1 -2,-2 v-67 a2,2 0 0 1 2,-2z" fill="none"/>

<path d="M766.5,345 L769.5,342 L772.5,345Z M766.5,349 L769.5,352 L772.5,349Z" fill="#000"/>
<path d="M765,347 H774" stroke="#909090" stroke-width="1"/>
<path d="M766.5,366 L769.5,363 L772.5,366Z M766.5,370 L769.5,373 L772.5,370Z" fill="#000"/>
<path d="M765,368 H774" stroke="#909090" stroke-width="1"/>
<path d="M766.5,387 L769.5,384 L772.5,387Z M766.5,391 L769.5,394 L772.5,391Z" fill="#000"/>
<path d="M765,389 H774" stroke="#909090" stroke-width="1"/>
<path d="M766.5,415 L769.5,412 L772.5,415Z M766.5,419 L769.5,422 L772.5,419Z" fill="#000"/>
<path d="M765,417 H774" stroke="#909090" stroke-width="1"/>
<path d="M766.5,436 L769.5,433 L772.5,436Z M766.5,440 L769.5,443 L772.5,440Z" fill="#000"/>
<path d="M765,438 H774" stroke="#909090" stroke-width="1"/>
<path d="M766.5,457 L769.5,454 L772.5,457Z M766.5,461 L769.5,464 L772.5,461Z" fill="#000"/>
<path d="M765,459 H774" stroke="#909090" stroke-width="1"/>
<path d="M223.5,666 L226.5,663 L229.5,666Z M223.5,670 L226.5,673 L229.5,670Z" fill="#000"/>
<path d="M222,668 H231" stroke="#909090" stroke-width="1"/>
<path d="M305.5,666 L308.5,663 L311.5,666Z M305.5,670 L308.5,673 L311.5,670Z" fill="#000"/>
<path d="M304,668 H313" stroke="#909090" stroke-width="1"/>
<path d="M671.5,688 L674.5,685 L677.5,688Z M671.5,692 L674.5,695 L677.5,692Z" fill="#000"/>
<path d="M670,690 H679" stroke="#909090" stroke-width="1"/>
<g><text x="8.2" y="15" font-size="12.4" fill="#000" text-anchor="start" font-weight="normal" textLength="17.5" lengthAdjust="spacingAndGlyphs" >File</text><text x="39.9" y="15" font-size="12.4" fill="#000" text-anchor="start" font-weight="normal" textLength="20" lengthAdjust="spacingAndGlyphs" >Edit</text><text x="74.3" y="15" font-size="12.4" fill="#000" text-anchor="start" font-weight="normal" textLength="28.4" lengthAdjust="spacingAndGlyphs" >Tools</text><text x="117.2" y="15" font-size="12.4" fill="#000" text-anchor="start" font-weight="normal" textLength="32.4" lengthAdjust="spacingAndGlyphs" >Group</text><text x="164.1" y="15" font-size="12.4" fill="#000" text-anchor="start" font-weight="normal" textLength="29.9" lengthAdjust="spacingAndGlyphs" >Views</text><text x="208.2" y="15" font-size="12.4" fill="#000" text-anchor="start" font-weight="normal" textLength="33.7" lengthAdjust="spacingAndGlyphs" >Create</text><text x="256.1" y="15" font-size="12.4" fill="#000" text-anchor="start" font-weight="normal" textLength="49.9" lengthAdjust="spacingAndGlyphs" >Modifiers</text><text x="320.4" y="15" font-size="12.4" fill="#000" text-anchor="start" font-weight="normal" textLength="55.4" lengthAdjust="spacingAndGlyphs" >Animation</text><text x="390.5" y="15" font-size="12.4" fill="#000" text-anchor="start" font-weight="normal" textLength="70.5" lengthAdjust="spacingAndGlyphs" >Graph Editors</text><text x="475.3" y="15" font-size="12.4" fill="#000" text-anchor="start" font-weight="normal" textLength="53.1" lengthAdjust="spacingAndGlyphs" >Rendering</text><text x="543.3" y="15" font-size="12.4" fill="#000" text-anchor="start" font-weight="normal" textLength="55.4" lengthAdjust="spacingAndGlyphs" >Customize</text><text x="613.1" y="15" font-size="12.4" fill="#000" text-anchor="start" font-weight="normal" textLength="55.9" lengthAdjust="spacingAndGlyphs" >MAXScript</text><text x="683" y="15" font-size="12.4" fill="#000" text-anchor="start" font-weight="normal" textLength="24.1" lengthAdjust="spacingAndGlyphs" >Help</text><text x="185" y="40" font-size="12" fill="#000" text-anchor="start" font-weight="normal" textLength="11.5" lengthAdjust="spacingAndGlyphs" >All</text><text x="486" y="40" font-size="12" fill="#000" text-anchor="start" font-weight="normal" textLength="23" lengthAdjust="spacingAndGlyphs" >View</text><text x="630" y="106.6" font-size="12" fill="#000" text-anchor="start" font-weight="normal" textLength="71.2" lengthAdjust="spacingAndGlyphs" >1_1000_Casilla</text><text x="630.6" y="134" font-size="12" fill="#000" text-anchor="start" font-weight="normal" textLength="55.6" lengthAdjust="spacingAndGlyphs" >Modifier List</text><text x="650.6" y="159.6" font-size="12" fill="#000" text-anchor="start" font-weight="normal" textLength="17.9" lengthAdjust="spacingAndGlyphs" >Box</text><text x="633.5" y="327" font-size="12" fill="#000" text-anchor="start" font-weight="normal" textLength="5" lengthAdjust="spacingAndGlyphs" >-</text><text x="681.7" y="326.8" font-size="12" fill="#000" text-anchor="start" font-weight="normal" textLength="52.8" lengthAdjust="spacingAndGlyphs" >Parameters</text><text x="670.5" y="350.6" font-size="12" fill="#000" text-anchor="start" font-weight="normal" textLength="34.8" lengthAdjust="spacingAndGlyphs" >Length:</text><text x="711" y="350.6" font-size="12" fill="#000" text-anchor="start" font-weight="normal" textLength="23.1" lengthAdjust="spacingAndGlyphs" >6,0m</text><text x="675" y="371.6" font-size="12" fill="#000" text-anchor="start" font-weight="normal" textLength="30.3" lengthAdjust="spacingAndGlyphs" >Width:</text><text x="711" y="371.6" font-size="12" fill="#000" text-anchor="start" font-weight="normal" textLength="23.1" lengthAdjust="spacingAndGlyphs" >4,0m</text><text x="672.7" y="392.6" font-size="12" fill="#000" text-anchor="start" font-weight="normal" textLength="32.6" lengthAdjust="spacingAndGlyphs" >Height:</text><text x="711" y="392.6" font-size="12" fill="#000" text-anchor="start" font-weight="normal" textLength="23.1" lengthAdjust="spacingAndGlyphs" >4,0m</text><text x="643.6" y="420.6" font-size="12" fill="#000" text-anchor="start" font-weight="normal" textLength="61.7" lengthAdjust="spacingAndGlyphs" >Length Segs:</text><text x="711" y="420.6" font-size="12" fill="#000" text-anchor="start" font-weight="normal" textLength="5" lengthAdjust="spacingAndGlyphs" >1</text><text x="648" y="441.6" font-size="12" fill="#000" text-anchor="start" font-weight="normal" textLength="57.3" lengthAdjust="spacingAndGlyphs" >Width Segs:</text><text x="711" y="441.6" font-size="12" fill="#000" text-anchor="start" font-weight="normal" textLength="5" lengthAdjust="spacingAndGlyphs" >1</text><text x="645.4" y="462.6" font-size="12" fill="#000" text-anchor="start" font-weight="normal" textLength="59.9" lengthAdjust="spacingAndGlyphs" >Height Segs:</text><text x="711" y="462.6" font-size="12" fill="#000" text-anchor="start" font-weight="normal" textLength="5" lengthAdjust="spacingAndGlyphs" >1</text><text x="653.7" y="487.8" font-size="12" fill="#000" text-anchor="start" font-weight="normal" textLength="125.6" lengthAdjust="spacingAndGlyphs" >Generate Mapping Coords.</text><text x="653.7" y="509.5" font-size="12" fill="#000" text-anchor="start" font-weight="normal" textLength="99.2" lengthAdjust="spacingAndGlyphs" >Real-World Map Size</text><text x="62.2" y="621.4" font-size="12" fill="#000" text-anchor="start" font-weight="normal" textLength="35.6" lengthAdjust="spacingAndGlyphs" >0 / 100</text><text x="54.2" y="672.7" font-size="12" fill="#000" text-anchor="start" font-weight="normal" textLength="38.9" lengthAdjust="spacingAndGlyphs" >1 Object</text><text x="53.8" y="697.6" font-size="12" fill="#000" text-anchor="start" font-weight="normal" textLength="197.5" lengthAdjust="spacingAndGlyphs" >Click and drag to select and move objects</text><text x="151.9" y="672.6" font-size="12" fill="#000" text-anchor="start" font-weight="normal" textLength="9.3" lengthAdjust="spacingAndGlyphs" >X:</text><text x="166.9" y="672.6" font-size="12" fill="#000" text-anchor="start" font-weight="normal" textLength="22.5" lengthAdjust="spacingAndGlyphs" >0,0m</text><text x="233.8" y="672.6" font-size="12" fill="#000" text-anchor="start" font-weight="normal" textLength="9.3" lengthAdjust="spacingAndGlyphs" >Y:</text><text x="248.9" y="672.6" font-size="12" fill="#000" text-anchor="start" font-weight="normal" textLength="22.5" lengthAdjust="spacingAndGlyphs" >0,0m</text><text x="316" y="673" font-size="12" fill="#000" text-anchor="start" font-weight="normal" textLength="9.5" lengthAdjust="spacingAndGlyphs" >Z:</text><text x="330.5" y="672.6" font-size="12" fill="#000" text-anchor="start" font-weight="normal" textLength="22.5" lengthAdjust="spacingAndGlyphs" >0,0m</text><text x="409.3" y="672.6" font-size="12" fill="#000" text-anchor="start" font-weight="normal" textLength="42.7" lengthAdjust="spacingAndGlyphs" >Auto Key</text><text x="413" y="694.6" font-size="12" fill="#000" text-anchor="start" font-weight="normal" textLength="36.2" lengthAdjust="spacingAndGlyphs" >Set Key</text><text x="461.6" y="672" font-size="12" fill="#000" text-anchor="start" font-weight="normal" textLength="41.9" lengthAdjust="spacingAndGlyphs" >Selected</text><text x="499.9" y="695" font-size="12" fill="#000" text-anchor="start" font-weight="normal" textLength="56.8" lengthAdjust="spacingAndGlyphs" >Key Filters...</text><text x="608.8" y="693.3" font-size="12" fill="#000" text-anchor="start" font-weight="normal" textLength="6" lengthAdjust="spacingAndGlyphs" >0</text></g>
<rect x="625.5" y="403.5" width="164" height="70" rx="3" fill="rgba(255,0,0,.2)" stroke="#ff0000" stroke-width="3"/>
</svg>
</body></html>
